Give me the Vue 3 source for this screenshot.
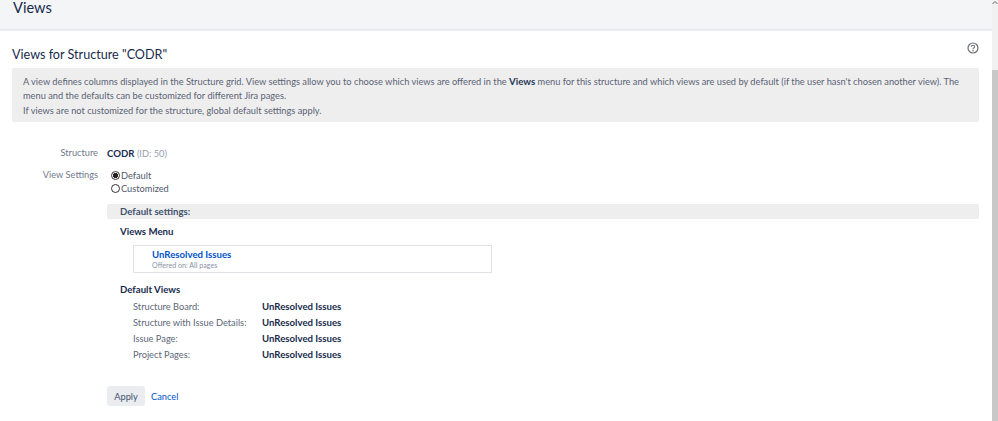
<script setup>
const defaults = ['Structure Board:', 'Structure with Issue Details:', 'Issue Page:', 'Project Pages:']
</script>

<template>
  <div class="page">
    <div class="main">
      <header class="top"><h1>Views</h1></header>
      <section class="content">
        <div class="title-row">
          <h2>Views for Structure "CODR"</h2>
          <svg class="help" width="12" height="12" viewBox="0 0 12 12">
            <circle cx="6" cy="6" r="5" fill="none" stroke="#6b6f76" stroke-width="1.2" />
            <path d="M4.4 4.8C4.4 3.8 5.1 3.2 6 3.2S7.6 3.8 7.6 4.7C7.6 5.8 6 5.9 6 7.2" fill="none" stroke="#6b6f76" stroke-width="1.1" />
            <circle cx="6" cy="8.8" r=".75" fill="#6b6f76" />
          </svg>
        </div>
        <div class="notice">
          <p>A view defines columns displayed in the Structure grid. View settings allow you to choose which views are offered in the <b>Views</b> menu for this structure and which views are used by default (if the user hasn't chosen another view). The menu and the defaults can be customized for different Jira pages.</p>
          <p class="second">If views are not customized for the structure, global default settings apply.</p>
        </div>
        <div class="form">
          <div class="row structure">
            <span class="label">Structure</span>
            <span class="value"><b>CODR</b> <span class="muted">(ID: 50)</span></span>
          </div>
          <div class="row settings">
            <span class="label">View Settings</span>
            <div class="radios">
              <label class="radio"><span class="dot on"></span>Default</label>
              <label class="radio"><span class="dot"></span>Customized</label>
            </div>
          </div>
          <div class="panel">
            <div class="panel-head">Default settings:</div>
            <div class="panel-body">
              <h3>Views Menu</h3>
              <div class="menu-box">
                <a class="view-link">UnResolved Issues</a>
                <small>Offered on: All pages</small>
              </div>
              <h3 class="dv">Default Views</h3>
              <div class="defaults">
                <template v-for="d in defaults" :key="d">
                  <span class="d-name">{{ d }}</span>
                  <b class="d-val">UnResolved Issues</b>
                </template>
              </div>
            </div>
          </div>
          <div class="actions">
            <button class="apply">Apply</button>
            <a class="cancel">Cancel</a>
          </div>
        </div>
      </section>
    </div>
    <div class="scrollbar">
      <svg class="arrow" width="6" height="5" viewBox="0 0 6 5"><path d="M.5 4 3 1.5 5.5 4" fill="none" stroke="#666" stroke-width="1" /></svg>
      <div class="thumb"></div>
    </div>
  </div>
</template>

<style scoped>
.page {
  display: flex;
  width: 998px;
  height: 421px;
  overflow: hidden;
  background: #fff;
  font-family: Lato, "Open Sans", sans-serif;
  font-size: 9.25px;
  color: #172b4d;
}
b { font-size: 9.65px; }
.main { flex: 1; min-width: 0; }
.top {
  height: 29px;
  background: #f4f5f7;
  border-bottom: 2px solid #e9ebee;
}
h1 {
  margin: 0;
  padding: 0 0 0 13px;
  font-size: 14.6px;
  font-weight: 400;
  line-height: 15px;
}
.content { padding: 0 13px 0 12px; }
.title-row {
  height: 37px;
  display: flex;
  justify-content: space-between;
  padding-top: 16px;
  box-sizing: border-box;
}
h2 { margin: 0; font-size: 12.6px; font-weight: 400; line-height: 16px; }
.help { margin: -5px 0 0; }
.notice {
  background: #eeeeee;
  border-radius: 2px;
  height: 54px;
  box-sizing: border-box;
  padding: 7px 11px;
  color: #5a6375;
  line-height: 13.5px;
}
.notice p { margin: 0; }
.notice b { color: #253858; }
.notice .second { margin-top: 2px; }
.form { padding-top: 24px; }
.row { display: flex; }
.label { width: 86px; text-align: right; color: #70798a; margin-right: 9px; }
.structure { line-height: 14px; }
.muted { color: #97a0af; }
.settings { margin-top: 8px; }
.radios { display: flex; flex-direction: column; }
.radio { display: flex; align-items: center; line-height: 13px; color: #4f5a6b; }
.dot {
  box-sizing: border-box;
  width: 9px;
  height: 9px;
  border: 1px solid #333;
  border-radius: 50%;
  margin: 0 1px 0 4px;
  background: #fff;
}
.dot.on { background: radial-gradient(circle, #222 0 2.4px, #fff 2.9px); }
.panel { margin: 9px 0 0 95px; }
.panel-head {
  height: 15px;
  line-height: 15px;
  background: #eeeeee;
  padding-left: 13px;
  font-size: 9.65px;
  font-weight: 700;
  color: #42526e;
  border-radius: 2px;
}
.panel-body { padding-left: 13px; }
h3 { margin: 5px 0 0; font-size: 9.65px; font-weight: 700; line-height: 14px; color: #172b4d; }
.menu-box {
  margin: 7px 0 0 13px;
  width: 359px;
  height: 28px;
  box-sizing: border-box;
  border: 1px solid #dfe1e6;
  padding: 3px 0 0 18px;
  display: flex;
  flex-direction: column;
}
.view-link { color: #0052cc; font-weight: 700; line-height: 11px; font-size: 9.65px; }
small { font-size: 7.1px; color: #8993a4; line-height: 10px; margin-top: 1px; }
.dv { margin-top: 9px; }
.defaults {
  display: grid;
  grid-template-columns: 129px auto;
  grid-auto-rows: 16px;
  align-items: baseline;
  margin: 2px 0 0 13px;
  line-height: 16px;
  justify-content: start;
}
.d-name { color: #5c6778; white-space: nowrap; }
.d-val { color: #172b4d; }
.actions { display: flex; align-items: center; margin: 24px 0 0 95px; gap: 6px; }
.apply {
  width: 38px;
  height: 20px;
  padding: 0;
  border: 0;
  border-radius: 3px;
  background: #ebecf0;
  color: #42526e;
  font: inherit;
}
.cancel { color: #0052cc; }
.scrollbar { width: 6px; background: #f1f1f1; position: relative; }
.arrow { display: block; }
.thumb { position: absolute; left: 0; right: 0; top: 70px; bottom: 0; background: #c8c8c8; }
</style>
